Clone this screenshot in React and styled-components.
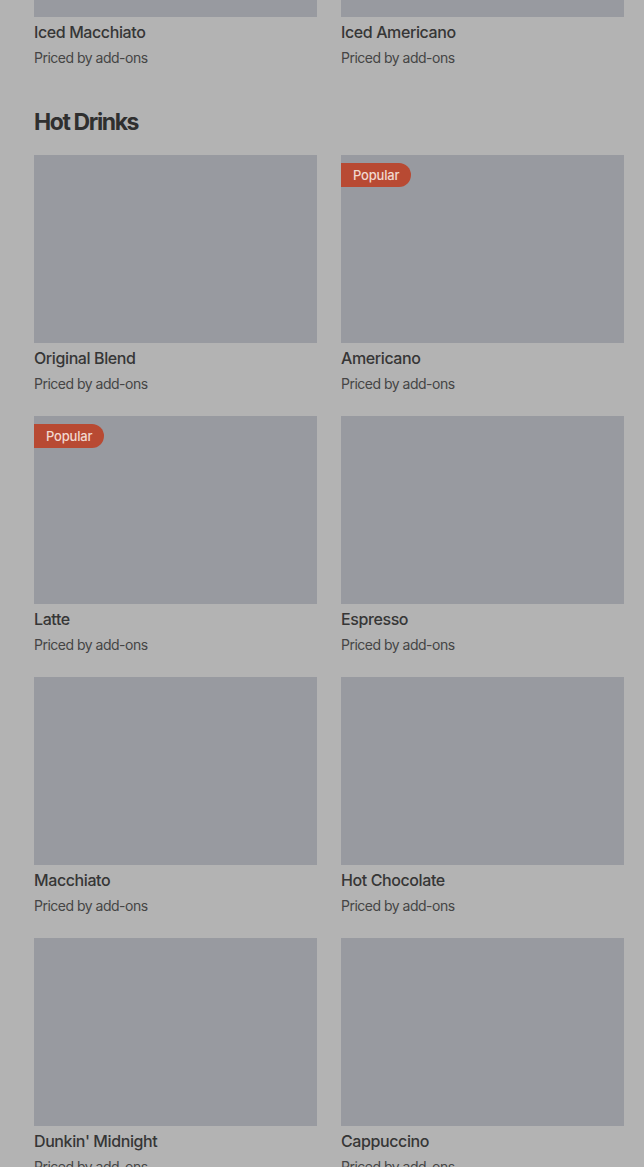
import React from 'react';
import styled, { createGlobalStyle } from 'styled-components';

const GlobalStyle = createGlobalStyle`
  html, body {
    margin: 0;
    padding: 0;
    background: #b3b3b3;
    overflow: hidden;
  }
  body {
    font-family: Inter, "Liberation Sans", Arial, sans-serif;
    color: #333333;
  }
`;

const Page = styled.div`
  height: 1167px;
  overflow: hidden;
  background: #b3b3b3;
`;

// the menu is scrolled, so the first row of iced drinks is cut off at the top
const Scroller = styled.div`
  margin-top: -171px;
  padding: 0 20px 0 34px;
`;

const Section = styled.section`
  & + & {
    margin-top: 38px;
  }
`;

const SectionTitle = styled.h2`
  margin: 0 0 17px;
  font-size: 23px;
  line-height: 32px;
  font-weight: 700;
  letter-spacing: -1.4px;
  color: #2f2f2f;
`;

const Grid = styled.div`
  display: grid;
  grid-template-columns: 1fr 1fr;
  column-gap: 24px;
  row-gap: 22px;
`;

const Card = styled.div`
  display: flex;
  flex-direction: column;
`;

const Thumb = styled.div`
  position: relative;
  height: 188px;
  background: #989aa0;
`;

const Badge = styled.span`
  position: absolute;
  top: 8px;
  left: 0;
  height: 24px;
  padding: 0 12px;
  display: flex;
  align-items: center;
  background: #b84a33;
  color: #f1d8cf;
  font-size: 13px;
  font-weight: 500;
  letter-spacing: -0.2px;
  border-radius: 0 12px 12px 0;
`;

const Name = styled.div`
  margin-top: 3px;
  font-size: 16px;
  line-height: 24px;
  font-weight: 500;
  letter-spacing: -0.4px;
  color: #363636;
`;

const Price = styled.div`
  margin-top: 4px;
  font-size: 14px;
  line-height: 20px;
  letter-spacing: -0.5px;
  color: #454545;
`;

const sections = [
  {
    title: null,
    items: [{ name: 'Iced Macchiato' }, { name: 'Iced Americano' }],
  },
  {
    title: 'Hot Drinks',
    items: [
      { name: 'Original Blend' },
      { name: 'Americano', popular: true },
      { name: 'Latte', popular: true },
      { name: 'Espresso' },
      { name: 'Macchiato' },
      { name: 'Hot Chocolate' },
      { name: "Dunkin' Midnight" },
      { name: 'Cappuccino' },
    ],
  },
];

function MenuCard({ name, popular }) {
  return (
    <Card>
      <Thumb>{popular && <Badge>Popular</Badge>}</Thumb>
      <Name>{name}</Name>
      <Price>Priced by add-ons</Price>
    </Card>
  );
}

export default function App() {
  return (
    <Page>
      <GlobalStyle />
      <Scroller>
        {sections.map((section, i) => (
          <Section key={i}>
            {section.title && <SectionTitle>{section.title}</SectionTitle>}
            <Grid>
              {section.items.map((item) => (
                <MenuCard key={item.name} {...item} />
              ))}
            </Grid>
          </Section>
        ))}
      </Scroller>
    </Page>
  );
}
